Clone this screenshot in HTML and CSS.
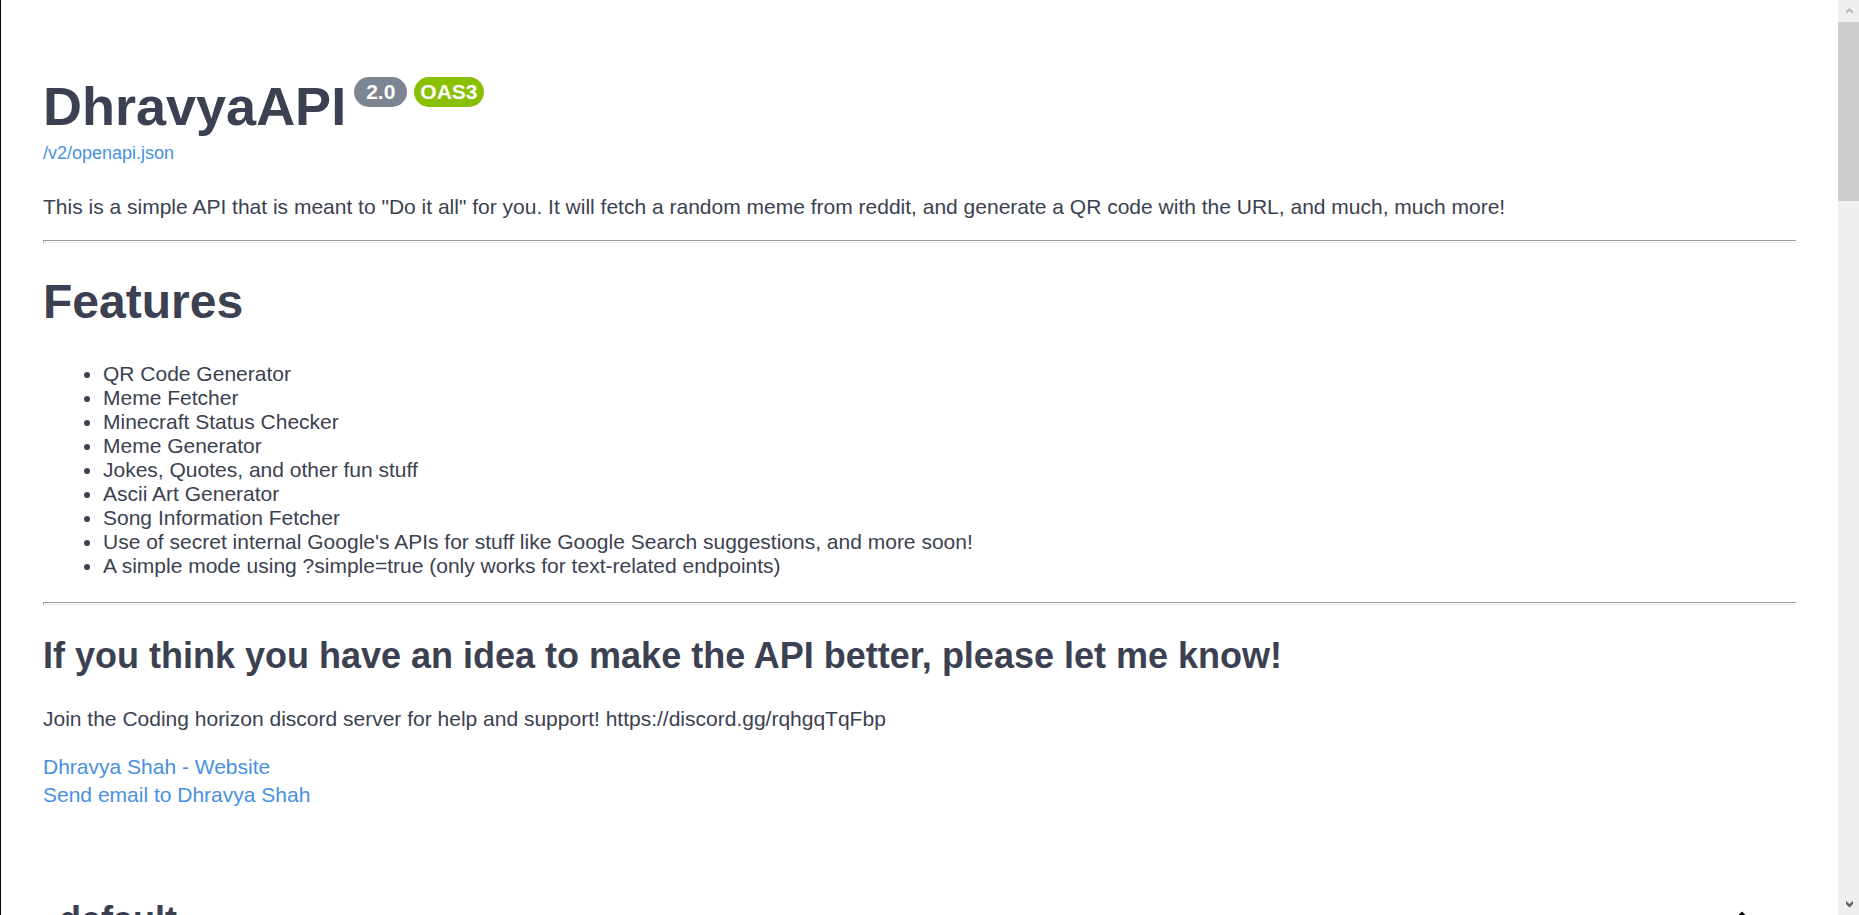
FILE: index.html
```html
<!DOCTYPE html>
<html lang="en">
<head>
<meta charset="utf-8">
<title>DhravyaAPI</title>
<link rel="stylesheet" href="styles.css">
</head>
<body class="window">
<main class="page">
  <header class="masthead">
    <h1 class="title">DhravyaAPI</h1>
    <div class="badges">
      <span class="badge badge-version">2.0</span>
      <span class="badge badge-spec">OAS3</span>
    </div>
  </header>
  <a class="spec-link" href="/v2/openapi.json">/v2/openapi.json</a>
  <p class="intro">This is a simple API that is meant to "Do it all" for you. It will fetch a random meme from reddit, and generate a QR code with the URL, and much, much more!</p>
  <hr class="rule">
  <h1 class="heading-large">Features</h1>
  <ul class="features">
    <li>QR Code Generator</li>
    <li>Meme Fetcher</li>
    <li>Minecraft Status Checker</li>
    <li>Meme Generator</li>
    <li>Jokes, Quotes, and other fun stuff</li>
    <li>Ascii Art Generator</li>
    <li>Song Information Fetcher</li>
    <li>Use of secret internal Google's APIs for stuff like Google Search suggestions, and more soon!</li>
    <li>A simple mode using ?simple=true (only works for text-related endpoints)</li>
  </ul>
  <hr class="rule">
  <h2 class="heading">If you think you have an idea to make the API better, please let me know!</h2>
  <p class="support">Join the Coding horizon discord server for help and support! https://discord.gg/rqhgqTqFbp</p>
  <nav class="contact">
    <a href="#website">Dhravya Shah - Website</a>
    <a href="#email">Send email to Dhravya Shah</a>
  </nav>
  <section class="tag">
    <h3 class="tag-name">default</h3>
    <button class="tag-toggle" type="button" aria-label="Collapse operation">
      <svg class="tag-arrow" viewBox="0 0 20 20" aria-hidden="true"><path d="M17.418 14.908c.272.268.709.268.979 0s.271-.701 0-.969l-7.908-7.83c-.27-.268-.707-.268-.979 0l-7.908 7.83c-.27.268-.271.701 0 .969s.709.268.979 0L10 7.767z"/></svg>
    </button>
  </section>
</main>
<aside class="scrollbar" aria-hidden="true">
  <svg class="scroll-arrow scroll-arrow-up" viewBox="0 0 21 22"><path d="M8 14v-3l3.500-3 3.500 3v3l-3.500-3z"/></svg>
  <div class="track"><div class="thumb"></div></div>
  <svg class="scroll-arrow" viewBox="0 0 21 22"><path d="M8 8v3l3.500 3.500 3.500-3.500V8l-3.500 3z"/></svg>
</aside>
</body>
</html>
```

FILE: styles.css
```css
* {
  box-sizing: border-box;
}

.window {
  display: flex;
  height: 100vh;
  margin: 0;
  overflow: hidden;
  border-left: 1px solid #05010d;
  background: #fff;
  color: #3b4151;
  font: 21px/24px "Liberation Sans", Arial, sans-serif;
}

.page {
  flex: 1;
  min-width: 0;
  padding: 75px 42px 0;
}

.masthead {
  display: flex;
  align-items: flex-start;
  gap: 8px;
}

.title {
  margin: 0;
  font-size: 54px;
  line-height: 62px;
}

.badges {
  display: flex;
  gap: 7px;
  padding-top: 2px;
}

.badge {
  border-radius: 15px;
  color: #fff;
  font-weight: bold;
  line-height: 30px;
}

.badge-version {
  padding: 0 12px;
  background: #7d8492;
}

.badge-spec {
  padding: 0 6px;
  background: #89bf04;
}

.spec-link,
.contact {
  color: #4990e2;
}

.spec-link {
  display: block;
  width: fit-content;
  margin-top: 6px;
  font-size: 18px;
  line-height: 20px;
  text-decoration: none;
}

.intro {
  margin: 32px 0 21px;
}

.rule {
  height: 3px;
  margin: 0;
  border: 1px solid;
  border-color: #9a9a9a #eee #eee #9a9a9a;
}

.heading-large {
  margin: 31px 0 32px;
  font-size: 48px;
  line-height: 56px;
}

.features {
  margin: 0 0 24px;
  padding-left: 60px;
}

.heading {
  margin: 30px 0;
  font-size: 36px;
  line-height: 42px;
}

.support {
  margin: 0;
}

.contact {
  display: flex;
  flex-direction: column;
  align-items: flex-start;
  margin-top: 22px;
  line-height: 28px;
}

.contact a {
  color: inherit;
  text-decoration: none;
}

.tag {
  display: flex;
  align-items: flex-start;
  justify-content: space-between;
  margin-top: 90px;
  padding: 0 39px 0 16px;
}

.tag-name {
  margin: 0;
  font-size: 36px;
  line-height: 42px;
}

.tag-toggle {
  padding: 4px 0 0;
  border: 0;
  background: none;
}

.tag-arrow {
  display: block;
  width: 30px;
  height: 30px;
}

.scrollbar {
  display: flex;
  flex-direction: column;
  width: 21px;
  background: #efefef;
}

.scroll-arrow {
  height: 22px;
  fill: #606060;
}

.scroll-arrow-up {
  fill: #bcbcbc;
}

.track {
  flex: 1;
}

.thumb {
  height: 20.5%;
  background: #cdcdcd;
}
```
